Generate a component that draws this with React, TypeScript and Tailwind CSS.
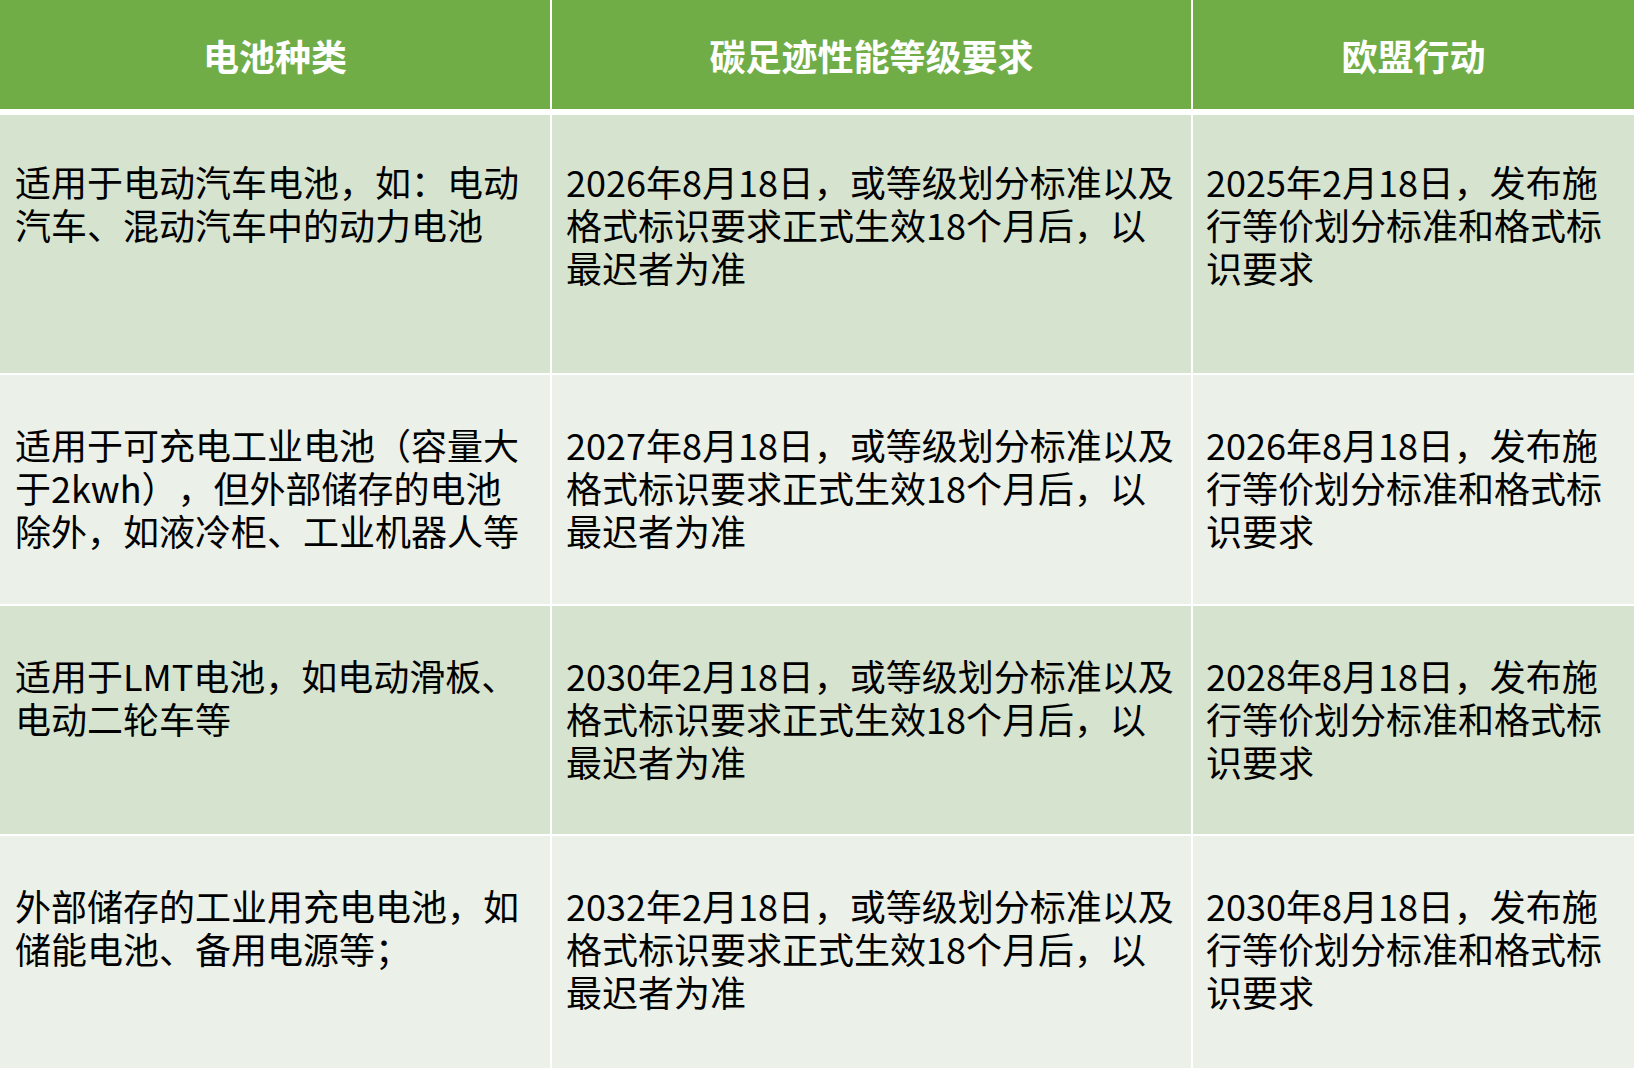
import React from "react";

const font = { fontFamily: '"Noto Sans CJK SC", "Noto Sans", sans-serif' };

type Row = { h: string; pt: string; bg: string; c1: string[]; c2: string[]; c3: string[] };

const rows: Row[] = [
  {
    h: "h-[258px]",
    pt: "pt-[45px]",
    bg: "bg-[#d6e3cf]",
    c1: ["适用于电动汽车电池，如：电动", "汽车、混动汽车中的动力电池"],
    c2: ["2026年8月18日，或等级划分标准以及", "格式标识要求正式生效18个月后，以", "最迟者为准"],
    c3: ["2025年2月18日，发布施", "行等价划分标准和格式标", "识要求"],
  },
  {
    h: "h-[229px]",
    pt: "pt-[48px]",
    bg: "bg-[#ebf0e8]",
    c1: ["适用于可充电工业电池（容量大", "于2kwh），但外部储存的电池", "除外，如液冷柜、工业机器人等"],
    c2: ["2027年8月18日，或等级划分标准以及", "格式标识要求正式生效18个月后，以", "最迟者为准"],
    c3: ["2026年8月18日，发布施", "行等价划分标准和格式标", "识要求"],
  },
  {
    h: "h-[228px]",
    pt: "pt-[48px]",
    bg: "bg-[#d6e3cf]",
    c1: ["适用于LMT电池，如电动滑板、", "电动二轮车等"],
    c2: ["2030年2月18日，或等级划分标准以及", "格式标识要求正式生效18个月后，以", "最迟者为准"],
    c3: ["2028年8月18日，发布施", "行等价划分标准和格式标", "识要求"],
  },
  {
    h: "h-[232px]",
    pt: "pt-[48px]",
    bg: "bg-[#ebf0e8]",
    c1: ["外部储存的工业用充电电池，如", "储能电池、备用电源等；"],
    c2: ["2032年2月18日，或等级划分标准以及", "格式标识要求正式生效18个月后，以", "最迟者为准"],
    c3: ["2030年8月18日，发布施", "行等价划分标准和格式标", "识要求"],
  },
];

function Lines({ lines }: { lines: string[] }) {
  return (
    <>
      {lines.map((l, i) => (
        <div key={i} className="whitespace-nowrap">
          {l}
        </div>
      ))}
    </>
  );
}

export default function App() {
  return (
    <div
      className="w-[1634px] h-[1068px] bg-white flex flex-col overflow-hidden text-black [text-spacing-trim:space-all]"
      style={font}
    >
      <div className="grid grid-cols-[550px_639px_1fr] gap-x-[2px] h-[109px] shrink-0">
        <div className="bg-[#70ad47] flex items-center justify-center text-white font-bold text-[36px] leading-[43px] pt-[2px]">电池种类</div>
        <div className="bg-[#70ad47] flex items-center justify-center text-white font-bold text-[36px] leading-[43px] pt-[2px]">碳足迹性能等级要求</div>
        <div className="bg-[#70ad47] flex items-center justify-center text-white font-bold text-[36px] leading-[43px] pt-[2px]">欧盟行动</div>
      </div>
      <div className="mt-[6px] flex flex-col gap-y-[2px]">
        {rows.map((r, i) => (
          <div key={i} className={`grid grid-cols-[550px_639px_1fr] gap-x-[2px] shrink-0 ${r.h}`}>
            <div className={`${r.bg} ${r.pt} pl-[15px] text-[36px] leading-[43px]`}>
              <Lines lines={r.c1} />
            </div>
            <div className={`${r.bg} ${r.pt} pl-[14px] text-[36px] leading-[43px]`}>
              <Lines lines={r.c2} />
            </div>
            <div className={`${r.bg} ${r.pt} pl-[13px] text-[36px] leading-[43px]`}>
              <Lines lines={r.c3} />
            </div>
          </div>
        ))}
      </div>
    </div>
  );
}
